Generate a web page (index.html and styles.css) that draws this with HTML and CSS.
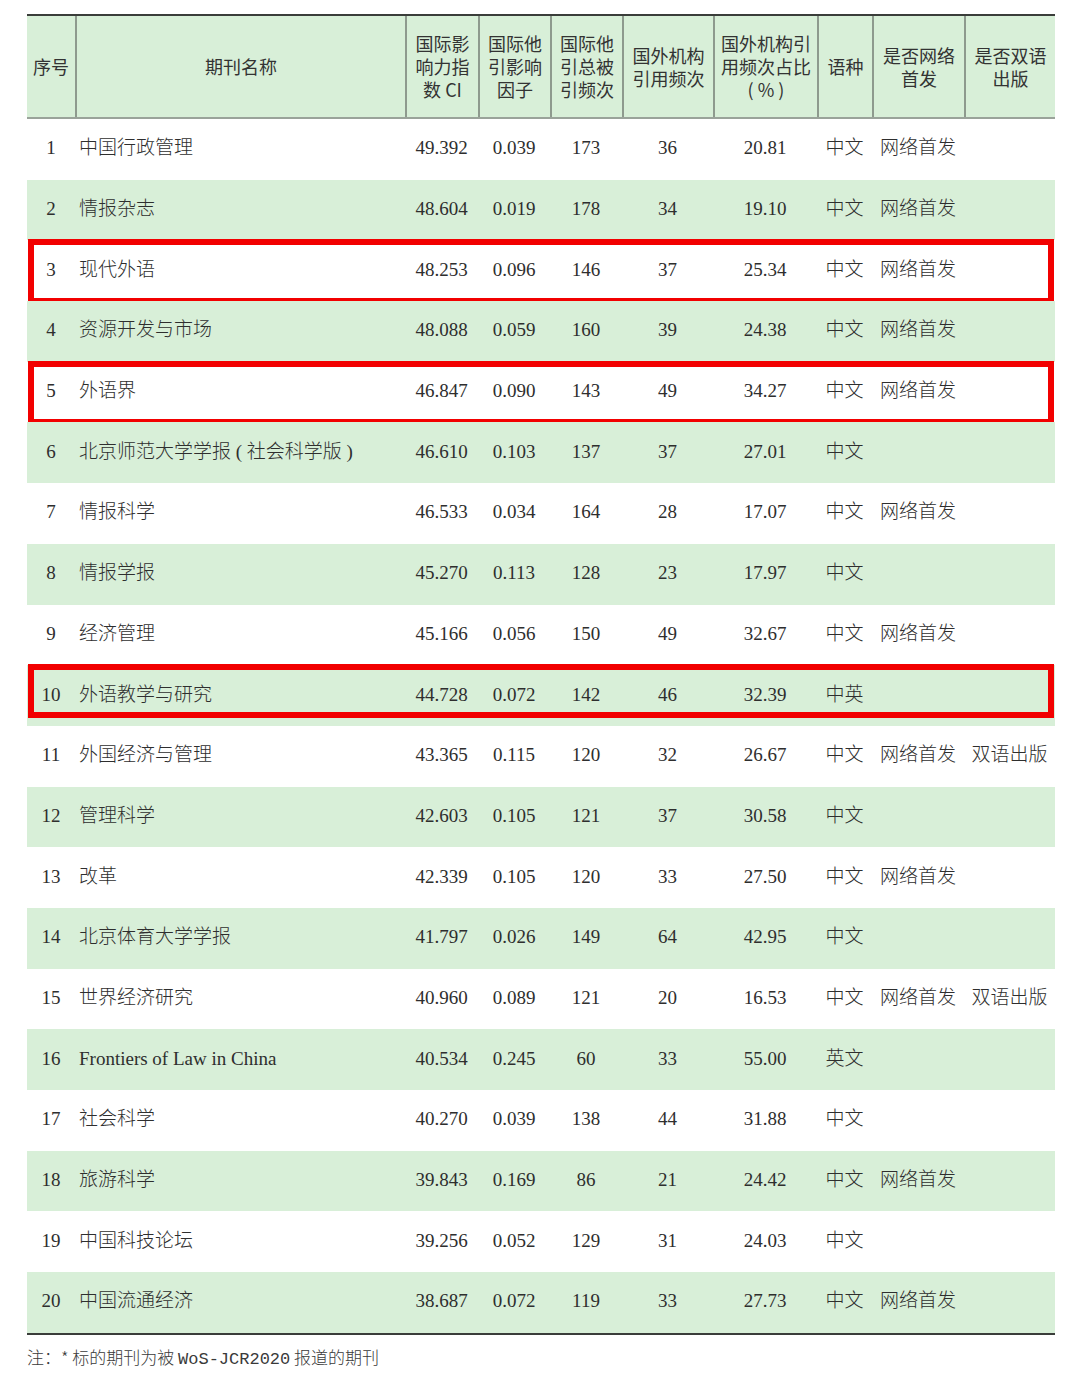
FILE: index.html
```html
<!DOCTYPE html>
<html lang="zh">
<head>
<meta charset="utf-8">
<title>期刊列表</title>
<link rel="stylesheet" href="styles.css">
</head>
<body>
<div class="page">
  <div class="table">
    <div class="row head">
      <div class="cell">序号</div>
      <div class="cell">期刊名称</div>
      <div class="cell">国际影<br>响力指<br>数 CI</div>
      <div class="cell">国际他<br>引影响<br>因子</div>
      <div class="cell">国际他<br>引总被<br>引频次</div>
      <div class="cell">国外机构<br>引用频次</div>
      <div class="cell">国外机构引<br>用频次占比<br>( % )</div>
      <div class="cell">语种</div>
      <div class="cell">是否网络<br>首发</div>
      <div class="cell">是否双语<br>出版</div>
    </div>
    <div class="row"><div class="cell">1</div><div class="cell name">中国行政管理</div><div class="cell">49.392</div><div class="cell">0.039</div><div class="cell">173</div><div class="cell">36</div><div class="cell">20.81</div><div class="cell">中文</div><div class="cell">网络首发</div><div class="cell"></div></div>
    <div class="row alt"><div class="cell">2</div><div class="cell name">情报杂志</div><div class="cell">48.604</div><div class="cell">0.019</div><div class="cell">178</div><div class="cell">34</div><div class="cell">19.10</div><div class="cell">中文</div><div class="cell">网络首发</div><div class="cell"></div></div>
    <div class="row mark"><div class="cell">3</div><div class="cell name">现代外语</div><div class="cell">48.253</div><div class="cell">0.096</div><div class="cell">146</div><div class="cell">37</div><div class="cell">25.34</div><div class="cell">中文</div><div class="cell">网络首发</div><div class="cell"></div></div>
    <div class="row alt"><div class="cell">4</div><div class="cell name">资源开发与市场</div><div class="cell">48.088</div><div class="cell">0.059</div><div class="cell">160</div><div class="cell">39</div><div class="cell">24.38</div><div class="cell">中文</div><div class="cell">网络首发</div><div class="cell"></div></div>
    <div class="row mark"><div class="cell">5</div><div class="cell name">外语界</div><div class="cell">46.847</div><div class="cell">0.090</div><div class="cell">143</div><div class="cell">49</div><div class="cell">34.27</div><div class="cell">中文</div><div class="cell">网络首发</div><div class="cell"></div></div>
    <div class="row alt"><div class="cell">6</div><div class="cell name">北京师范大学学报 ( 社会科学版 )</div><div class="cell">46.610</div><div class="cell">0.103</div><div class="cell">137</div><div class="cell">37</div><div class="cell">27.01</div><div class="cell">中文</div><div class="cell"></div><div class="cell"></div></div>
    <div class="row"><div class="cell">7</div><div class="cell name">情报科学</div><div class="cell">46.533</div><div class="cell">0.034</div><div class="cell">164</div><div class="cell">28</div><div class="cell">17.07</div><div class="cell">中文</div><div class="cell">网络首发</div><div class="cell"></div></div>
    <div class="row alt"><div class="cell">8</div><div class="cell name">情报学报</div><div class="cell">45.270</div><div class="cell">0.113</div><div class="cell">128</div><div class="cell">23</div><div class="cell">17.97</div><div class="cell">中文</div><div class="cell"></div><div class="cell"></div></div>
    <div class="row"><div class="cell">9</div><div class="cell name">经济管理</div><div class="cell">45.166</div><div class="cell">0.056</div><div class="cell">150</div><div class="cell">49</div><div class="cell">32.67</div><div class="cell">中文</div><div class="cell">网络首发</div><div class="cell"></div></div>
    <div class="row alt mark mark-short"><div class="cell">10</div><div class="cell name">外语教学与研究</div><div class="cell">44.728</div><div class="cell">0.072</div><div class="cell">142</div><div class="cell">46</div><div class="cell">32.39</div><div class="cell">中英</div><div class="cell"></div><div class="cell"></div></div>
    <div class="row"><div class="cell">11</div><div class="cell name">外国经济与管理</div><div class="cell">43.365</div><div class="cell">0.115</div><div class="cell">120</div><div class="cell">32</div><div class="cell">26.67</div><div class="cell">中文</div><div class="cell">网络首发</div><div class="cell">双语出版</div></div>
    <div class="row alt"><div class="cell">12</div><div class="cell name">管理科学</div><div class="cell">42.603</div><div class="cell">0.105</div><div class="cell">121</div><div class="cell">37</div><div class="cell">30.58</div><div class="cell">中文</div><div class="cell"></div><div class="cell"></div></div>
    <div class="row"><div class="cell">13</div><div class="cell name">改革</div><div class="cell">42.339</div><div class="cell">0.105</div><div class="cell">120</div><div class="cell">33</div><div class="cell">27.50</div><div class="cell">中文</div><div class="cell">网络首发</div><div class="cell"></div></div>
    <div class="row alt"><div class="cell">14</div><div class="cell name">北京体育大学学报</div><div class="cell">41.797</div><div class="cell">0.026</div><div class="cell">149</div><div class="cell">64</div><div class="cell">42.95</div><div class="cell">中文</div><div class="cell"></div><div class="cell"></div></div>
    <div class="row"><div class="cell">15</div><div class="cell name">世界经济研究</div><div class="cell">40.960</div><div class="cell">0.089</div><div class="cell">121</div><div class="cell">20</div><div class="cell">16.53</div><div class="cell">中文</div><div class="cell">网络首发</div><div class="cell">双语出版</div></div>
    <div class="row alt"><div class="cell">16</div><div class="cell name">Frontiers of Law in China</div><div class="cell">40.534</div><div class="cell">0.245</div><div class="cell">60</div><div class="cell">33</div><div class="cell">55.00</div><div class="cell">英文</div><div class="cell"></div><div class="cell"></div></div>
    <div class="row"><div class="cell">17</div><div class="cell name">社会科学</div><div class="cell">40.270</div><div class="cell">0.039</div><div class="cell">138</div><div class="cell">44</div><div class="cell">31.88</div><div class="cell">中文</div><div class="cell"></div><div class="cell"></div></div>
    <div class="row alt"><div class="cell">18</div><div class="cell name">旅游科学</div><div class="cell">39.843</div><div class="cell">0.169</div><div class="cell">86</div><div class="cell">21</div><div class="cell">24.42</div><div class="cell">中文</div><div class="cell">网络首发</div><div class="cell"></div></div>
    <div class="row"><div class="cell">19</div><div class="cell name">中国科技论坛</div><div class="cell">39.256</div><div class="cell">0.052</div><div class="cell">129</div><div class="cell">31</div><div class="cell">24.03</div><div class="cell">中文</div><div class="cell"></div><div class="cell"></div></div>
    <div class="row alt"><div class="cell">20</div><div class="cell name">中国流通经济</div><div class="cell">38.687</div><div class="cell">0.072</div><div class="cell">119</div><div class="cell">33</div><div class="cell">27.73</div><div class="cell">中文</div><div class="cell">网络首发</div><div class="cell"></div></div>
  </div>
  <p class="note">注：* 标的期刊为被 <span class="mono">WoS-JCR2020</span> 报道的期刊</p>
</div>
</body>
</html>
```
FILE: styles.css
```css
html, body {
  margin: 0;
  padding: 0;
  background: #ffffff;
}

.page {
  padding: 14px 25px 0 27px;
}

.table {
  width: 1028px;
  border-top: 2px solid #3a3d3a;
  border-bottom: 2px solid #3a3d3a;
}

.row {
  display: grid;
  grid-template-columns: 48px 330px 73px 72px 72px 91px 104px 55px 92px 91px;
  height: 60.7px;
  align-items: center;
  position: relative;
  font-family: "Liberation Serif", "Noto Sans CJK SC", serif;
  font-size: 19px;
  line-height: 24px;
  color: #2e2e2e;
}

.row .cell {
  text-align: center;
  white-space: nowrap;
  font-weight: 300;
  padding-bottom: 2px;
}

.row .cell.name {
  text-align: left;
  padding-left: 4px;
}

.row.alt {
  background: #d8efd8;
}

.row.head {
  height: 101px;
  background: #d8efd8;
  align-items: stretch;
  border-bottom: 2px solid #9aa39a;
  font-family: "Noto Sans CJK SC", "Noto Sans", sans-serif;
  font-size: 18px;
  line-height: 23px;
  color: #333333;
}

.row.head .cell {
  display: flex;
  align-items: center;
  justify-content: center;
  text-align: center;
  font-weight: 400;
  white-space: normal;
  padding-bottom: 0;
}

.row.head .cell + .cell {
  border-left: 2px solid #8e9a8e;
}

.row.mark::after {
  content: "";
  position: absolute;
  left: 1px;
  right: 1px;
  top: -1px;
  bottom: -3px;
  border: 6px solid #f20000;
  pointer-events: none;
}

.row.mark-short::after {
  top: -1px;
  bottom: 8px;
}

.note {
  margin: 11px 0 0 0;
  font-family: "Noto Sans CJK SC", sans-serif;
  font-size: 17px;
  line-height: 22px;
  color: #3a3a3a;
  font-weight: 300;
}

.note .mono {
  font-family: "Liberation Mono", monospace;
  font-size: 17px;
  font-weight: 400;
}
```
